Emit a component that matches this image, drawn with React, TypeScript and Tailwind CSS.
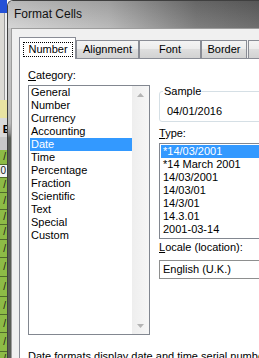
import React from 'react';

const categories = [
  'General',
  'Number',
  'Currency',
  'Accounting',
  'Date',
  'Time',
  'Percentage',
  'Fraction',
  'Scientific',
  'Text',
  'Special',
  'Custom'
];

const types = ['*14/03/2001', '*14 March 2001', '14/03/2001', '14/03/01', '14/3/01', '14.3.01', '2001-03-14'];

// sheet cells peeking out behind the dialog
const cells: Array<{ cls: string; text: string; white?: boolean }> = [
  { cls: 'h-[15px]', text: '/' },
  { cls: 'h-[13px]', text: 'I0', white: true },
  { cls: 'h-[15px]', text: '/' },
  { cls: 'h-[17px]', text: '/' },
  { cls: 'h-[15px]', text: '/' },
  { cls: 'h-[15px]', text: '/' },
  { cls: 'h-[18px]', text: '/' },
  { cls: 'h-[19px]', text: '/' },
  { cls: 'h-[20px]', text: '/' },
  { cls: 'h-[18px]', text: '/' },
  { cls: 'h-[18px]', text: '/' },
  { cls: 'h-[19px]', text: '/' },
  { cls: 'h-[15px]', text: '/' }
];

const ExcelStrip: React.FC = () => (
  <div className="flex w-[7px] shrink-0 flex-col overflow-hidden bg-[#8dbb46]">
    <div className="h-[13px] shrink-0 bg-[#2451d6]" />
    <div className="h-[87px] shrink-0 bg-[linear-gradient(to_right,#dcdad5_0,#dcdad5_4px,#9a9a9a_4px,#9a9a9a_5px,#eeeeee_5px)]" />
    <div className="h-[18px] shrink-0 bg-[#e9e3a2]" />
    <div className="flex h-[19px] shrink-0 items-end justify-end bg-[#dadada] pb-[2px] text-[11px] font-bold leading-none">
      <span className="-mr-[3px]">E</span>
    </div>
    <div className="h-[13px] shrink-0 bg-[#c8c8c8]" />
    {cells.map((c, i) => (
      <div
        key={i}
        className={`${c.cls} flex shrink-0 items-center justify-end overflow-hidden border-b border-[#4f6b2b] pr-px text-[10px] leading-none text-[#1a1a1a] ${
          c.white ? 'bg-[#f4f4f4]' : 'bg-[#8dbb46]'
        }`}
      >
        {c.text}
      </div>
    ))}
  </div>
);

const Arrow: React.FC<{ down?: boolean }> = ({ down }) => (
  <svg width="7" height="4" viewBox="0 0 7 4">
    {down ? <path d="M0 0h7L3.5 4z" fill="#b4b4b4" /> : <path d="M0 4h7L3.5 0z" fill="#b4b4b4" />}
  </svg>
);

const Tab: React.FC<{ label: string; width: string }> = ({ label, width }) => (
  <div
    className={`${width} flex h-[18px] shrink-0 items-center justify-center border-x border-t border-[#898c95] bg-[linear-gradient(to_bottom,#f4f4f4,#ececec_50%,#dedede_50%,#d2d2d2)]`}
  >
    {label}
  </div>
);

const App: React.FC = () => {
  return (
    <div className="flex h-[358px] w-[259px] overflow-hidden bg-white font-['Liberation_Sans',Arial,sans-serif] text-[11px] leading-[13px] text-black">
      <ExcelStrip />

      <div className="flex min-w-0 flex-1 flex-col overflow-hidden rounded-tl-[6px] border-l border-t border-[#3f3f3f]">
        <div className="flex h-[27px] shrink-0 items-center bg-[linear-gradient(to_bottom,rgba(0,0,0,0.12),rgba(255,255,255,0.08)),linear-gradient(to_right,#d2d2d2,#b4b4b4_40%,#747474_75%,#626262)] pl-[6px] text-[12px] text-[#111]">
          Format Cells
        </div>

        <div className="flex min-h-0 flex-1">
          <div className="w-[3px] shrink-0 bg-[linear-gradient(to_bottom,#c8c8c8_0px,#b9b9b9_95px,#8d8d8d_105px,#585c55_110px,#585c55)]" />

          <div className="flex min-w-0 flex-1 flex-col border-l border-t border-[#9d9d9d] bg-[#f0f0f0] pl-[7px] pt-[8px]">
            {/* tabs */}
            <div className="flex h-[21px] shrink-0 items-end">
              <div className="relative z-10 -mb-px h-[22px] w-[57px] shrink-0 border-x border-t border-[#898c95] bg-white pl-[3px] pt-[4px]">
                <span className="flex h-[15px] w-[50px] items-center justify-center border border-dotted border-black">
                  Number
                </span>
              </div>
              <Tab label="Alignment" width="w-[63px]" />
              <Tab label="Font" width="w-[62px]" />
              <Tab label="Border" width="w-[46px]" />
              <div className="ml-px">
                <Tab label="" width="w-[40px]" />
              </div>
            </div>

            {/* page */}
            <div className="flex min-h-0 flex-1 flex-col border-l border-t border-[#898c95] bg-white pl-[8px] pt-[10px]">
              <div className="flex gap-[9px]">
                <div className="flex w-[122px] shrink-0 flex-col">
                  <div>
                    <span className="underline">C</span>ategory:
                  </div>
                  <div className="mt-[3px] flex h-[250px] border border-[#828790] bg-white">
                    <div className="flex-1 pl-px">
                      {categories.map((c) => (
                        <div
                          key={c}
                          className={`h-[13px] whitespace-nowrap pl-px ${c === 'Date' ? 'bg-[#3399ff] text-white' : ''}`}
                        >
                          {c}
                        </div>
                      ))}
                    </div>
                    <div className="flex w-[17px] shrink-0 flex-col justify-between bg-[linear-gradient(to_right,#eeeeee,#f6f6f6)]">
                      <div className="flex h-[17px] items-center justify-center">
                        <Arrow />
                      </div>
                      <div className="flex h-[17px] items-center justify-center">
                        <Arrow down />
                      </div>
                    </div>
                  </div>
                </div>

                <div className="flex w-[150px] shrink-0 flex-col">
                  <div className="relative mt-[22px] h-[31px] rounded-[3px] border border-[#d5dfe5] pl-[7px] pt-[13px]">
                    <span className="absolute -top-[7px] left-[3px] bg-white px-px">Sample</span>
                    04/01/2016
                  </div>

                  <div className="mt-[5px]">
                    <span className="underline">T</span>ype:
                  </div>
                  <div className="mt-[3px] h-[96px] border border-[#828790] bg-white pl-px pt-px">
                    {types.map((t, i) => (
                      <div
                        key={t}
                        className={`h-[13px] whitespace-nowrap pl-[2px] ${i === 0 ? 'bg-[#3399ff] text-white' : ''}`}
                      >
                        {t}
                      </div>
                    ))}
                  </div>

                  <div className="mt-[2px]">
                    <span className="underline">L</span>ocale (location):
                  </div>
                  <div className="mt-[6px] flex h-[19px] items-center border border-[#8e8f8f] bg-white pl-[3px]">
                    English (U.K.)
                  </div>
                </div>
              </div>

              <p className="mt-[15px] w-[380px] shrink-0">
                Date formats display date and time serial numbers as date values. Date formats that begin with an
                asterisk (*) respond to changes in regional date and time settings that are specified for the
                operating system.
              </p>
            </div>
          </div>
        </div>
      </div>
    </div>
  );
};

export default App;
